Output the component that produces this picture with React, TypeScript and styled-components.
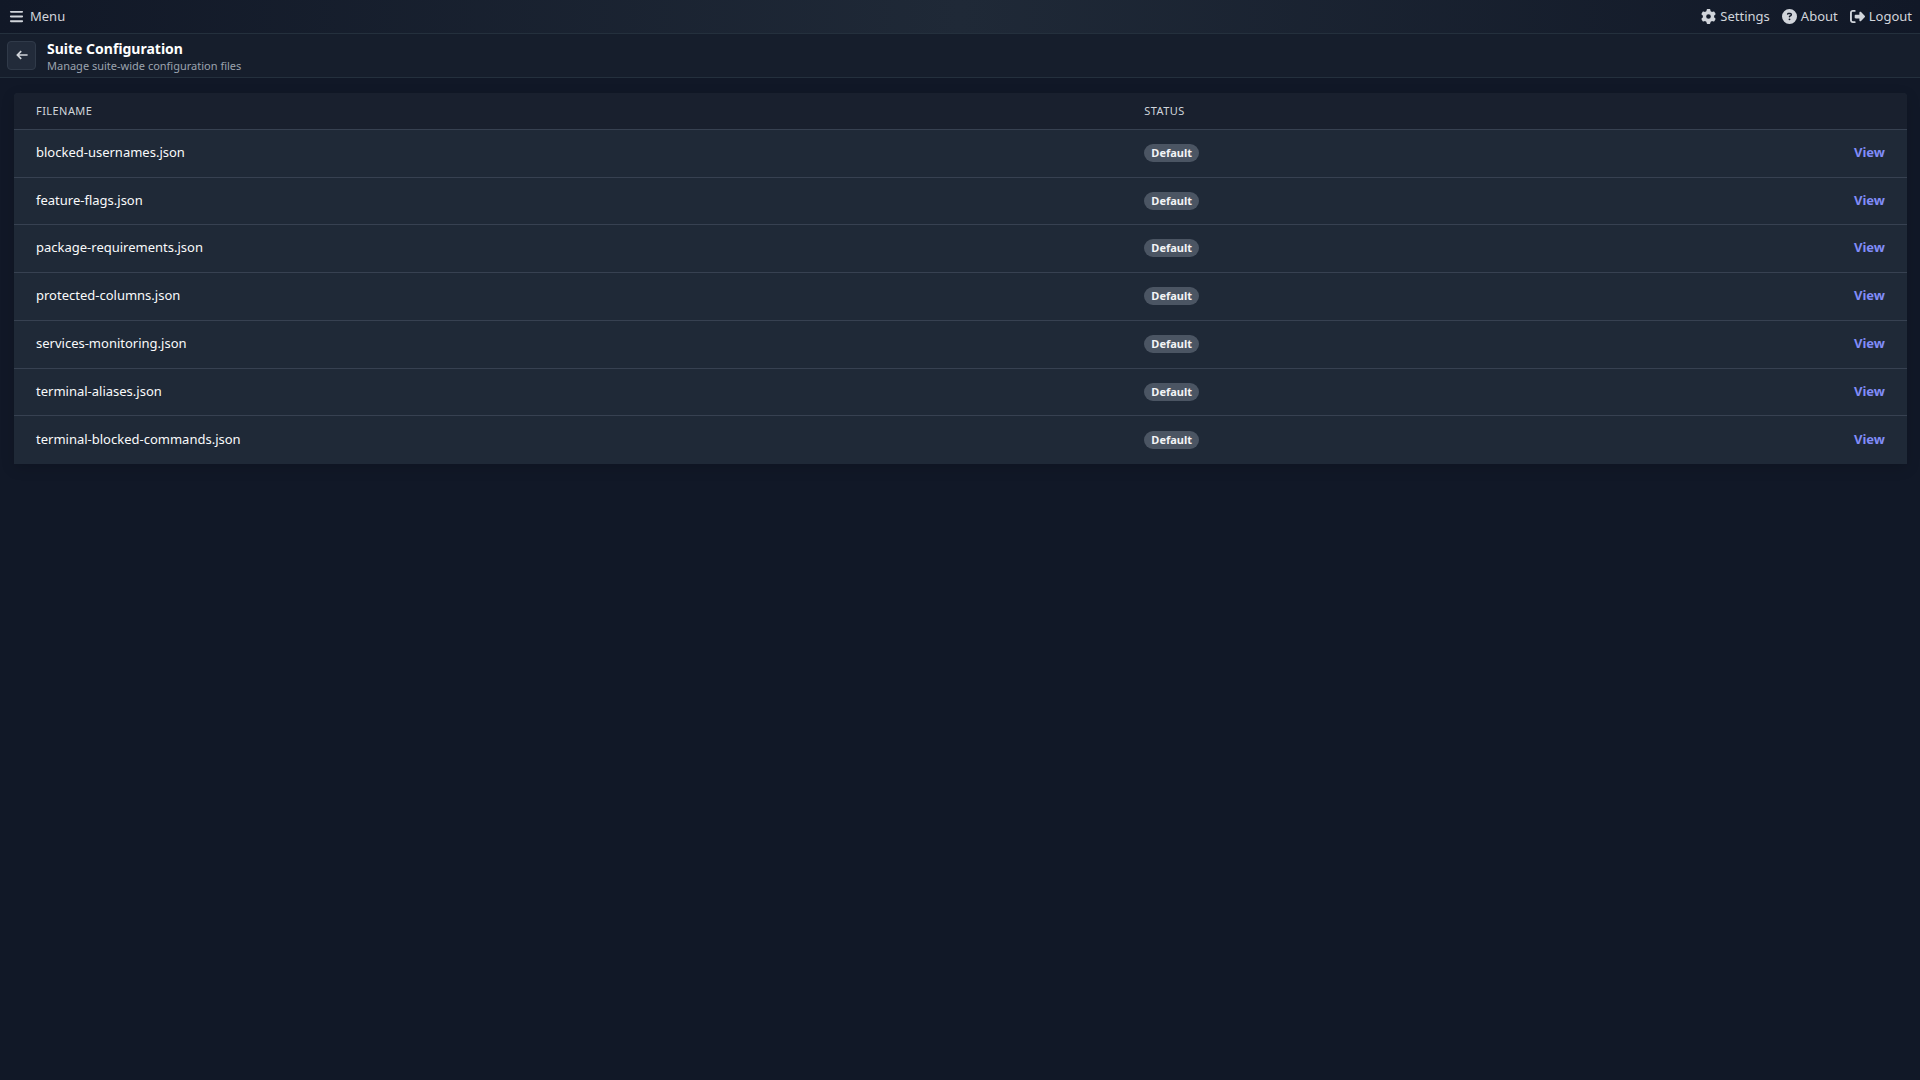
import React from "react";
import styled, { createGlobalStyle } from "styled-components";
import { FaBars, FaCircleQuestion, FaGear, FaRightFromBracket } from "react-icons/fa6";

const GlobalStyle = createGlobalStyle`
  *, *::before, *::after { box-sizing: border-box; }
  body {
    margin: 0;
    min-height: 100vh;
    background: #111827;
    color: #f9fafb;
    font-family: "Noto Sans", sans-serif;
    font-size: 13px;
    line-height: 20px;
  }
`;

const TopBar = styled.header`
  display: flex;
  align-items: center;
  justify-content: space-between;
  height: 34px;
  padding: 0 8px 1px;
  background: linear-gradient(90deg, #111827, #1f2937 50%, #111827);
  border-bottom: 1px solid #24303d;
`;

const TopNav = styled.nav`
  display: flex;
  gap: 12px;
`;

const MenuButton = styled.button`
  display: flex;
  align-items: center;
  gap: 6px;
  padding: 0 1px;
  border: 0;
  background: none;
  color: #d1d5db;
  font: inherit;
  cursor: pointer;
`;

const TopLink = styled.a`
  display: flex;
  align-items: center;
  gap: 4px;
  color: #d1d5db;
  text-decoration: none;
`;

const TitleBar = styled.div`
  display: flex;
  align-items: center;
  gap: 11px;
  height: 44px;
  padding: 0 7px;
  background: #161e2c;
  border-bottom: 1px solid #24303d;
`;

const BackLink = styled.a`
  display: flex;
  align-items: center;
  justify-content: center;
  width: 29px;
  height: 29px;
  padding-bottom: 1px;
  border: 1px solid #303a49;
  border-radius: 4px;
  background: #222b3a;
  color: #d1d5db;
`;

const Heading = styled.div`
  padding-top: 2px;
`;

const Title = styled.h1`
  margin: 0;
  font-size: 14px;
  line-height: 18px;
  font-weight: 700;
  color: #ffffff;
`;

const Subtitle = styled.p`
  margin: 0;
  font-size: 11px;
  line-height: 16px;
  color: #9ca3af;
`;

const Main = styled.main`
  padding: 15px 13px 15px 14px;
`;

const FileTable = styled.table`
  width: 100%;
  border-spacing: 0;
  table-layout: fixed;
  background: #1f2937;
  border-radius: 4px 4px 0 0;
  box-shadow: 0 4px 14px rgba(0, 0, 0, 0.15);
`;

const HeadCell = styled.th<{ $width?: string }>`
  width: ${(p) => p.$width ?? "auto"};
  padding: 8px 22px;
  border-bottom: 1px solid #374151;
  background: #19202e;
  color: #d1d5db;
  font-size: 11px;
  font-weight: 400;
  letter-spacing: 0.04em;
  text-align: left;
  text-transform: uppercase;
  &:first-child { border-top-left-radius: 4px; }
  &:last-child { border-top-right-radius: 4px; }
`;

const Cell = styled.td<{ $end?: boolean }>`
  height: 48px;
  padding: 0 22px 3px;
  text-align: ${(p) => (p.$end ? "right" : "left")};
  tr:not(:last-child) > & { border-bottom: 1px solid #374151; }
  tr:nth-child(4n + 2) > & { height: 47px; }
`;

const Badge = styled.span`
  display: inline-block;
  padding: 0 7px;
  border-radius: 9px;
  background: #4b5563;
  color: #f3f4f6;
  font-size: 11px;
  line-height: 18px;
  font-weight: 700;
`;

const ViewLink = styled.a`
  color: #818cf8;
  font-weight: 700;
  text-decoration: none;
`;

const files = [
  "blocked-usernames.json",
  "feature-flags.json",
  "package-requirements.json",
  "protected-columns.json",
  "services-monitoring.json",
  "terminal-aliases.json",
  "terminal-blocked-commands.json",
];

function BackArrow() {
  return (
    <svg width="12" height="10" viewBox="0 0 12 10" fill="none" stroke="currentColor" strokeWidth="1.7" aria-hidden>
      <path d="M11.6 5H1.6M5.2 1.2L1.4 5L5.2 8.8" />
    </svg>
  );
}

export default function App() {
  return (
    <>
      <GlobalStyle />
      <TopBar>
        <MenuButton type="button"><FaBars size={15} aria-hidden />Menu</MenuButton>
        <TopNav aria-label="Account">
          <TopLink href="#settings"><FaGear size={15} aria-hidden />Settings</TopLink>
          <TopLink href="#about"><FaCircleQuestion size={15} aria-hidden />About</TopLink>
          <TopLink href="#logout"><FaRightFromBracket size={15} aria-hidden />Logout</TopLink>
        </TopNav>
      </TopBar>
      <TitleBar>
        <BackLink href="#back" aria-label="Back"><BackArrow /></BackLink>
        <Heading>
          <Title>Suite Configuration</Title>
          <Subtitle>Manage suite-wide configuration files</Subtitle>
        </Heading>
      </TitleBar>
      <Main>
        <FileTable>
          <thead>
            <tr>
              <HeadCell scope="col" $width="58.55%">Filename</HeadCell>
              <HeadCell scope="col">Status</HeadCell>
              <HeadCell scope="col" aria-label="Actions" />
            </tr>
          </thead>
          <tbody>
            {files.map((name) => (
              <tr key={name}>
                <Cell>{name}</Cell>
                <Cell><Badge>Default</Badge></Cell>
                <Cell $end><ViewLink href={`#${name}`}>View</ViewLink></Cell>
              </tr>
            ))}
          </tbody>
        </FileTable>
      </Main>
    </>
  );
}
